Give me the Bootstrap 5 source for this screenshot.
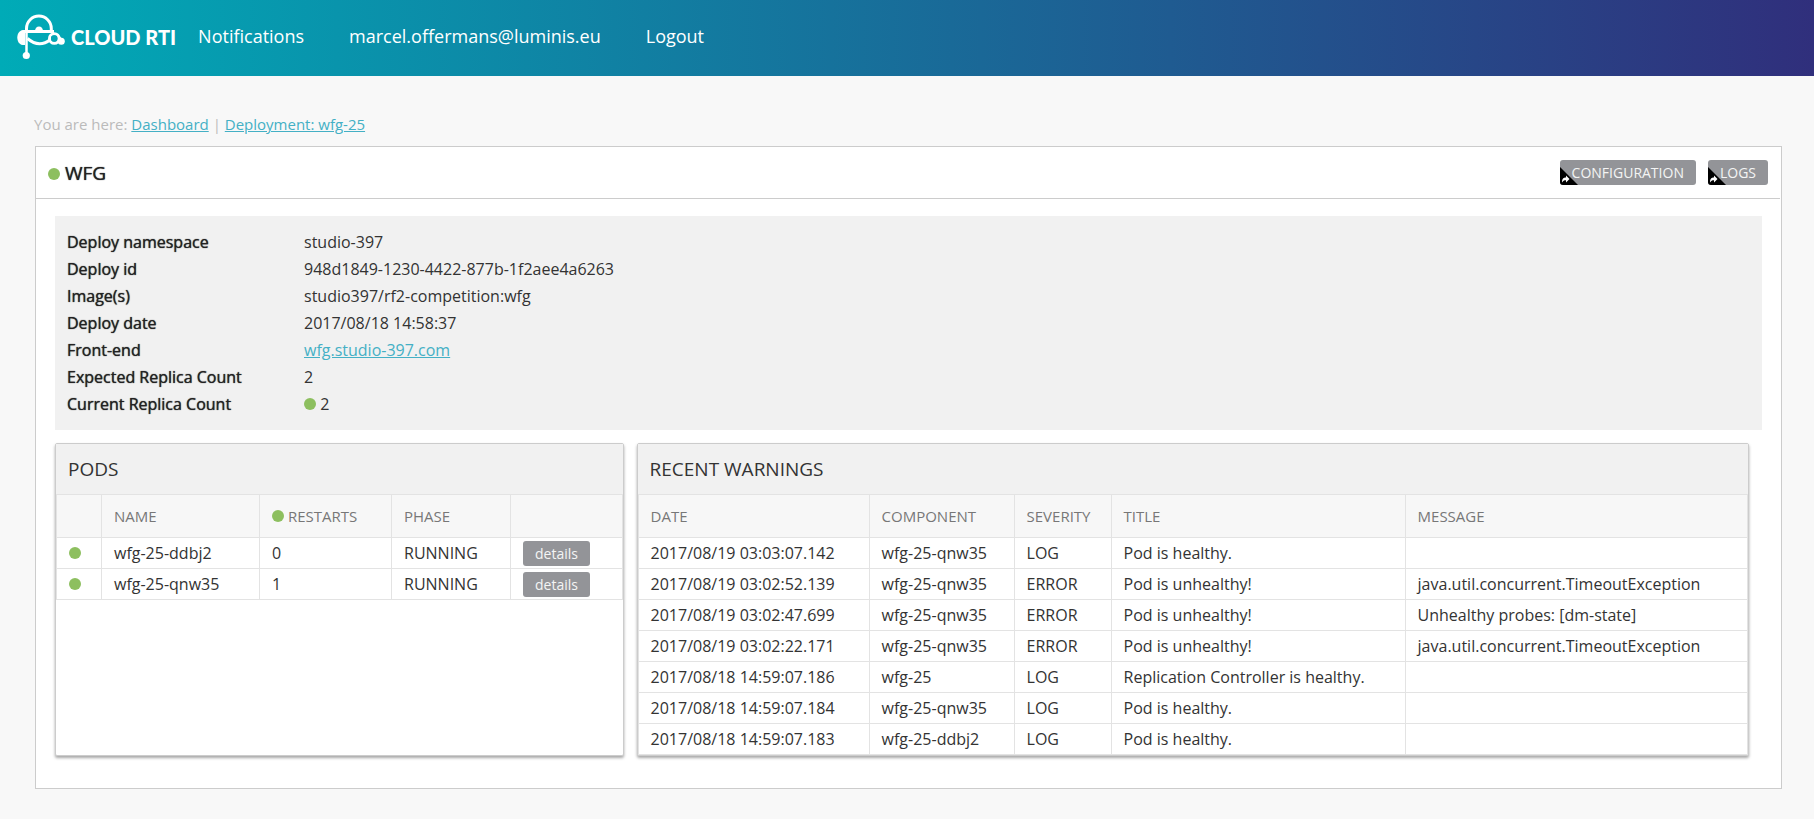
<!DOCTYPE html>
<html lang="en">
<head>
<meta charset="utf-8">
<meta name="viewport" content="width=device-width, initial-scale=1">
<title>Cloud RTI - Deployment wfg-25</title>
<link rel="stylesheet" href="https://cdn.jsdelivr.net/npm/bootstrap@5.3.0/dist/css/bootstrap.min.css">
<style>
body{font-family:"Open Sans",sans-serif;font-weight:400;font-size:16px;line-height:27px;color:#333;background:#f8f8f8}
a{color:#44b0c5}
a:hover{color:#2a8fa3}
.topbar{min-height:76px;padding:0 17px 2px;background:linear-gradient(90deg,#00abb7,#302f7c)}
.topbar .nav{gap:45px;margin-left:22px;padding-bottom:2px}
.topbar .nav-link{color:#fff;font-size:18px;line-height:24px;padding:0}
.brand-text{font-family:Lato,sans-serif;font-weight:900;font-size:20px;line-height:24px;color:#fff;margin-left:6px}
.crumbs{font-size:15px;line-height:24px;color:#bbb;margin:36px 34px 10px}
.sheet{margin:0 32px 30px 35px;border:1px solid #ccc;background:#fff}
.sheet-head{min-height:52px;padding:0 12px;border-bottom:1px solid #ccc;margin-right:1px}
.sheet-title{font-size:19px;line-height:28px;font-weight:500;margin:0;color:#222;text-shadow:0 0 1px #222}
.dot{display:inline-block;width:12px;height:12px;border-radius:50%;background:#8dbf5f}
.tool{position:relative;overflow:hidden;display:block;height:25px;padding:0 12px;border:0;border-radius:3px;background:#939498;color:#f4f4f4;font-size:14px;line-height:25px}
.tool svg{position:absolute;left:0;bottom:0}
.tools{gap:12px}
.facts{background:#f1f1f1;padding:13px 12px 12px;margin:17px 19px 13px}
.facts dt{width:237px;font-weight:500;color:#222;text-shadow:0 0 1px #222}
.facts dd{margin:0}
.panels{display:grid;grid-template-columns:23fr 45fr;gap:13px;margin:0 32px 32px 19px}
.panel{border:1px solid #ccc;border-radius:2px;background:#fff;box-shadow:0 2px 3px rgba(0,0,0,.35)}
.panel h2{margin:0;padding:0 12px;background:#f1f1f1;font-size:19px;font-weight:400;line-height:50px}
.grid-table{width:100%;border-collapse:collapse;table-layout:fixed}
.grid-table th,.grid-table td{border:1px solid #e3e3e3;padding:0 12px;height:31px;line-height:30px;white-space:nowrap}
.grid-table th{background:#f7f7f7;height:43px;font-weight:400;font-size:15px;color:#777}
.w-dot{width:45px}.w-name{width:158px}.w-restarts{width:132px}.w-phase{width:119px}
.w-date{width:231px}.w-component{width:145px}.w-severity{width:97px}.w-title{width:294px}
</style>
</head>
<body>
<header class="topbar d-flex align-items-center">
  <a href="#" class="d-flex align-items-center text-decoration-none" aria-label="Cloud RTI home">
    <svg width="48" height="46" viewBox="0 0 48 46" fill="none" stroke="#fff" stroke-width="3">
      <path d="M9.500 18V14.500A12.300 12.300 0 0 1 34.300 14.500V18M7 17.500H37"/>
      <path d="M10.500 24.500Q22 34.500 33.500 25.500"/>
      <path d="M8 16H6C2 16.500 .300 20 .300 23.500S2 30.500 5.500 31H8Z" fill="#fff" stroke="none"/>
      <path d="M9.500 17V40" stroke-width="2.500"/>
      <circle cx="9.300" cy="41.500" r="3.600" fill="#fff" stroke="none"/>
      <path d="M18 17a4 4.500 0 0 1 8 0Z" fill="#fff" stroke="none"/>
      <circle cx="37.300" cy="24.500" r="4.800"/>
      <path d="M40 19.500L46 25.500L44 29.500L40.500 29Z" fill="#fff" stroke="none"/>
      <circle cx="37.300" cy="24.500" r="3.300" fill="#04a6b5" stroke="none"/>
      <circle cx="44.300" cy="27.300" r="3.500" fill="#fff" stroke="none"/>
    </svg>
    <span class="brand-text">CLOUD RTI</span>
  </a>
  <nav class="nav">
    <a class="nav-link" href="#">Notifications</a>
    <a class="nav-link" href="#">marcel.offermans@luminis.eu</a>
    <a class="nav-link" href="#">Logout</a>
  </nav>
</header>

<nav class="crumbs">You are here: <a href="#">Dashboard</a> | <a href="#">Deployment: wfg-25</a></nav>

<main class="sheet">
  <div class="sheet-head d-flex align-items-center justify-content-between">
    <h1 class="sheet-title"><span class="dot"></span> WFG</h1>
    <div class="tools d-flex">
      <button type="button" class="tool"><svg width="18" height="18" viewBox="0 0 18 18"><path d="M0 0L18 18H0Z" fill="#000"/><path d="M2 15.500C2 11.500 3.500 10.500 6 10.500V8.500L9.500 12L6 15.500V13.300C4 13.300 3 13.800 2 15.500Z" fill="#fff"/></svg>CONFIGURATION</button>
      <button type="button" class="tool"><svg width="18" height="18" viewBox="0 0 18 18"><path d="M0 0L18 18H0Z" fill="#000"/><path d="M2 15.500C2 11.500 3.500 10.500 6 10.500V8.500L9.500 12L6 15.500V13.300C4 13.300 3 13.800 2 15.500Z" fill="#fff"/></svg>LOGS</button>
    </div>
  </div>

  <dl class="facts">
    <div class="d-flex"><dt>Deploy namespace</dt><dd>studio-397</dd></div>
    <div class="d-flex"><dt>Deploy id</dt><dd>948d1849-1230-4422-877b-1f2aee4a6263</dd></div>
    <div class="d-flex"><dt>Image(s)</dt><dd>studio397/rf2-competition:wfg</dd></div>
    <div class="d-flex"><dt>Deploy date</dt><dd>2017/08/18 14:58:37</dd></div>
    <div class="d-flex"><dt>Front-end</dt><dd><a href="#">wfg.studio-397.com</a></dd></div>
    <div class="d-flex"><dt>Expected Replica Count</dt><dd>2</dd></div>
    <div class="d-flex"><dt>Current Replica Count</dt><dd><span class="dot"></span> 2</dd></div>
  </dl>

  <div class="panels">
    <section class="panel">
      <h2>PODS</h2>
      <table class="grid-table">
        <colgroup><col class="w-dot"><col class="w-name"><col class="w-restarts"><col class="w-phase"><col></colgroup>
        <thead><tr><th></th><th>NAME</th><th><span class="dot"></span> RESTARTS</th><th>PHASE</th><th></th></tr></thead>
        <tbody>
          <tr><td><span class="dot"></span></td><td>wfg-25-ddbj2</td><td>0</td><td>RUNNING</td><td><button type="button" class="tool">details</button></td></tr>
          <tr><td><span class="dot"></span></td><td>wfg-25-qnw35</td><td>1</td><td>RUNNING</td><td><button type="button" class="tool">details</button></td></tr>
        </tbody>
      </table>
    </section>
    <section class="panel">
      <h2>RECENT WARNINGS</h2>
      <table class="grid-table">
        <colgroup><col class="w-date"><col class="w-component"><col class="w-severity"><col class="w-title"><col></colgroup>
        <thead><tr><th>DATE</th><th>COMPONENT</th><th>SEVERITY</th><th>TITLE</th><th>MESSAGE</th></tr></thead>
        <tbody>
          <tr><td>2017/08/19 03:03:07.142</td><td>wfg-25-qnw35</td><td>LOG</td><td>Pod is healthy.</td><td></td></tr>
          <tr><td>2017/08/19 03:02:52.139</td><td>wfg-25-qnw35</td><td>ERROR</td><td>Pod is unhealthy!</td><td>java.util.concurrent.TimeoutException</td></tr>
          <tr><td>2017/08/19 03:02:47.699</td><td>wfg-25-qnw35</td><td>ERROR</td><td>Pod is unhealthy!</td><td>Unhealthy probes: [dm-state]</td></tr>
          <tr><td>2017/08/19 03:02:22.171</td><td>wfg-25-qnw35</td><td>ERROR</td><td>Pod is unhealthy!</td><td>java.util.concurrent.TimeoutException</td></tr>
          <tr><td>2017/08/18 14:59:07.186</td><td>wfg-25</td><td>LOG</td><td>Replication Controller is healthy.</td><td></td></tr>
          <tr><td>2017/08/18 14:59:07.184</td><td>wfg-25-qnw35</td><td>LOG</td><td>Pod is healthy.</td><td></td></tr>
          <tr><td>2017/08/18 14:59:07.183</td><td>wfg-25-ddbj2</td><td>LOG</td><td>Pod is healthy.</td><td></td></tr>
        </tbody>
      </table>
    </section>
  </div>
</main>
<script src="https://cdn.jsdelivr.net/npm/bootstrap@5.3.0/dist/js/bootstrap.bundle.min.js"></script>
</body>
</html>
